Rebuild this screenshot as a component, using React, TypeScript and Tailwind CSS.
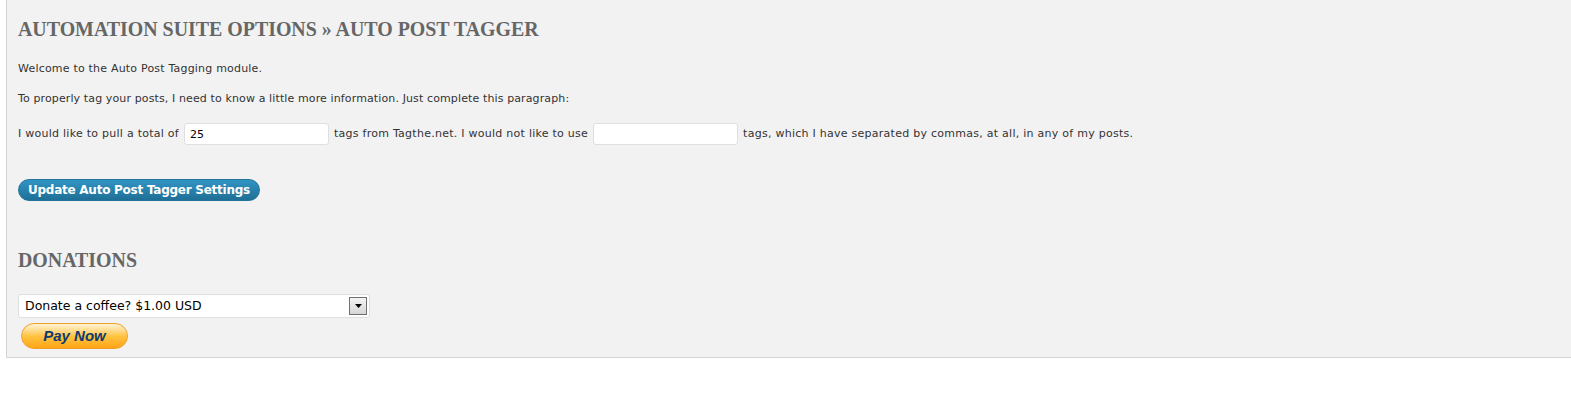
import React from "react";

const SANS = "font-['Verdana','DejaVu_Sans',sans-serif]";
const SERIF = "font-['Georgia','Liberation_Serif',serif]";

function Heading({ children }: { children: React.ReactNode }) {
  return (
    <h2 className={`${SERIF} text-[19.9px] font-bold uppercase leading-[26px] tracking-normal text-[#666]`}>
      {children}
    </h2>
  );
}

function TextInput({ value }: { value?: string }) {
  return (
    <input
      type="text"
      defaultValue={value}
      className={`${SANS} mx-[5px] h-[22px] w-[145px] rounded-[3px] border border-[#dfdfdf] bg-white px-[5px] text-[11px] tracking-normal text-black outline-none`}
    />
  );
}

export default function App() {
  return (
    <div className="min-h-[407px] bg-white">
      <div className={`${SANS} ml-[6px] border-b border-l border-[#d4d4d4] bg-[#f2f2f2] pl-[11px] pt-[16px] pb-[8px] text-[11px] text-[#333]`}>
        <Heading>Automation Suite Options » Auto Post Tagger</Heading>

        <p className="mt-[20px] leading-[14px] tracking-[0.2px]">Welcome to the Auto Post Tagging module.</p>
        <p className="mt-[16px] leading-[14px] tracking-[0.12px]">
          To properly tag your posts, I need to know a little more information. Just complete this paragraph:
        </p>

        <p className="mt-[17px] flex items-center leading-[14px] tracking-[0.26px]">
          <span>I would like to pull a total of</span>
          <TextInput value="25" />
          <span>tags from Tagthe.net. I would not like to use</span>
          <TextInput />
          <span>tags, which I have separated by commas, at all, in any of my posts.</span>
        </p>

        <div className="mt-[34px]">
          <button className="h-[22px] rounded-full border border-[#21759b] bg-gradient-to-b from-[#3195c4] to-[#1f6f96] px-[9px] text-[12px] font-bold leading-[18px] tracking-[-0.25px] text-white">
            Update Auto Post Tagger Settings
          </button>
        </div>

        <div className="mt-[46px]">
          <Heading>Donations</Heading>
        </div>

        <div className="mt-[21px] flex h-[24px] w-[352px] items-center justify-between rounded-[3px] border border-[#dfdfdf] bg-white pl-[6px] pr-[2px]">
          <span className="text-[12.5px] text-black">Donate a coffee? $1.00 USD</span>
          <span className="flex h-[18px] w-[18px] items-center justify-center border border-[#707070] bg-gradient-to-b from-[#f4f4f4] to-[#d6d6d6]">
            <svg width="7" height="4" viewBox="0 0 7 4">
              <path d="M0 0h7L3.5 4z" fill="#000" />
            </svg>
          </span>
        </div>

        <div className="mt-[5px] pl-[3px]">
          <button className="h-[26px] w-[107px] rounded-full border border-[#f19f2a] bg-gradient-to-b from-[#fff4d2] via-[#ffc43f] to-[#ffa514] font-['Liberation_Sans',Arial,sans-serif] text-[15px] font-bold italic leading-[22px] text-[#0d3b71]">
            Pay Now
          </button>
        </div>
      </div>
    </div>
  );
}
